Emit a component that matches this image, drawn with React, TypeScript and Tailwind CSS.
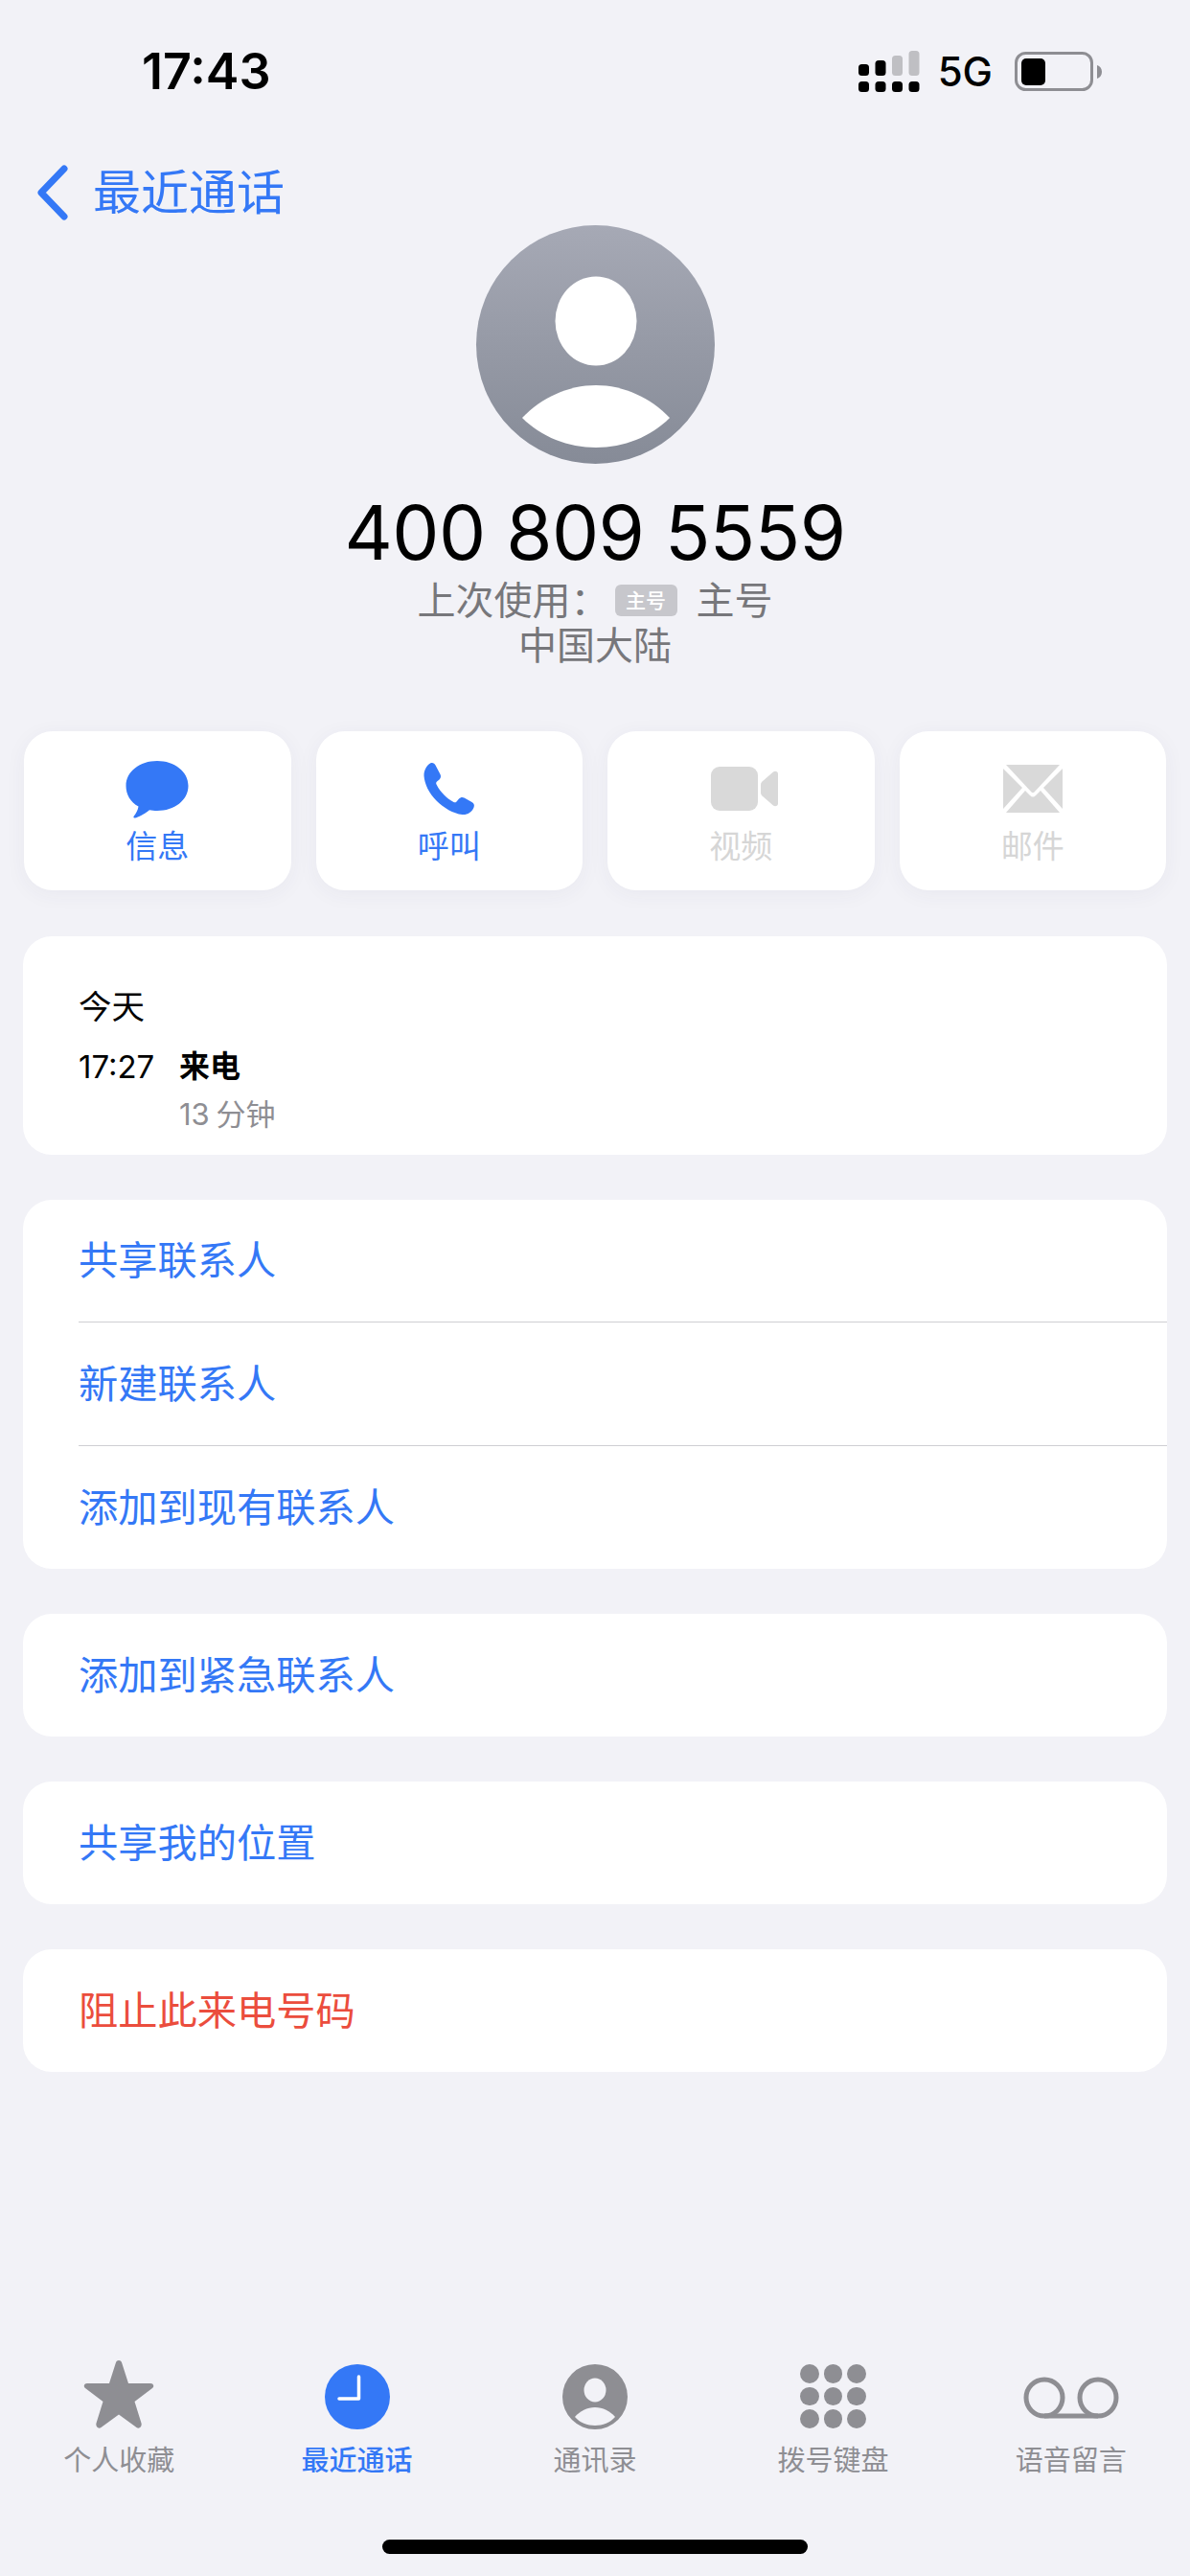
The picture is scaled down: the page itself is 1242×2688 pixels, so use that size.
const cjk = "font-['Inter','Noto_Sans_CJK_SC',sans-serif]";

function Signal() {
  return (
    <svg width="64" height="44" viewBox="0 0 64 44">
      <rect x="0" y="14" width="11" height="12" rx="3.5" fill="#000" />
      <rect x="17.5" y="10" width="11" height="16" rx="3.5" fill="#000" />
      <rect x="35" y="5" width="11" height="21" rx="3.5" fill="#bfbfc3" />
      <rect x="52.5" y="0" width="11" height="26" rx="3.5" fill="#bfbfc3" />
      <rect x="0" y="32" width="11" height="11" rx="3.5" fill="#000" />
      <rect x="17.5" y="32" width="11" height="11" rx="3.5" fill="#000" />
      <rect x="35" y="32" width="11" height="11" rx="3.5" fill="#000" />
      <rect x="52.5" y="32" width="11" height="11" rx="3.5" fill="#000" />
    </svg>
  );
}

function Battery() {
  return (
    <svg width="92" height="42" viewBox="0 0 92 42">
      <rect x="1.5" y="1.5" width="79" height="38" rx="10" fill="none" stroke="#8e8e93" strokeWidth="3" />
      <rect x="7" y="7" width="25" height="28" rx="5" fill="#000" />
      <path d="M86 14c3 1 5 3.500 5 7s-2 6-5 7z" fill="#8e8e93" />
    </svg>
  );
}

function Avatar() {
  return (
    <div className="flex h-[249px] w-[249px] items-center justify-center rounded-full bg-gradient-to-b from-[#a6a9b5] to-[#868b97]">
      <svg width="249" height="249" viewBox="0 0 249 249">
        <ellipse cx="125" cy="100" rx="42.500" ry="46.500" fill="#fff" />
        <path d="M48 201C68 180 96 167 125 167C154 167 182 180 202 201C182 221 154 232 125 232C96 232 68 221 48 201Z" fill="#fff" />
      </svg>
    </div>
  );
}

function MessageIcon() {
  return (
    <svg width="66" height="60" viewBox="0 0 66 60">
      <path d="M33 0C51 0 65.500 11 65.500 26S51 52 33 52C30 52 27.500 51.800 25 51.300C20 55.500 13 59 10 59.500C8 59.800 8 58.500 9 57.300C11 55 13 51 13.500 47.500C5 43 .5 35 .5 26C.5 11 15 0 33 0Z" fill="#3478f6" />
    </svg>
  );
}

function PhoneIcon() {
  return (
    <svg className="mb-[3px]" width="54" height="56" viewBox="0 0 54 56">
      <path d="M7 1.500C9.500 .5 11.500 1.500 12.500 3.500L17.500 13C18.500 15 18 17 16.500 18.500L14 20.500C13 21.500 13 22.500 13.500 23.500C15.500 28 19 32 21.500 34.500C24 37 27.500 40 31.500 42C32.500 42.500 33.500 42.500 34.500 41.500L37 38.500C38.500 37 40.500 36.500 42.500 37.500L50.500 42C52.500 43 53.500 45 52.500 47.500C50.500 52.500 45.500 55.500 40.500 55C31 54 21 48 13.500 40.500C6 33 1 23 .5 14.500C.3 9 3 4 7 1.500Z" fill="#3478f6" />
    </svg>
  );
}

function VideoIcon() {
  return (
    <svg className="mb-[7px] ml-[8px]" width="70" height="47" viewBox="0 0 70 47">
      <rect x="0" y="0" width="49" height="46" rx="9" fill="#d9d9d9" />
      <path d="M52 19C52 17.500 52.500 16.500 53.500 15.500L65 5.500C67 4 70 5 70 7.500V38.500C70 41 67 42 65 40.500L53.500 30.500C52.500 29.500 52 28.500 52 27Z" fill="#d9d9d9" />
    </svg>
  );
}

function MailIcon() {
  return (
    <svg className="mb-[6px]" width="62" height="50" viewBox="0 0 62 50">
      <path d="M3 0H59L32.500 28.500C31.500 29.500 30.500 29.500 29.500 28.500Z" fill="#d9d9d9" />
      <path d="M0 4L20 24L0 46Z" fill="#d9d9d9" />
      <path d="M62 4L42 24L62 46Z" fill="#d9d9d9" />
      <path d="M3 50L23 27L28 32C30 34 32 34 34 32L39 27L59 50Z" fill="#d9d9d9" />
    </svg>
  );
}

function StarIcon() {
  return (
    <svg width="74" height="72" viewBox="0 0 74 72">
      <path d="M37 0C38.800 0 39.800 1.200 40.300 3L47 24H70C73 24 74.500 27 72 29L53.500 43L60.500 65.500C61.500 69 58.500 72 55.500 70L37 56.500L18.500 70C15.500 72 12.500 69 13.500 65.500L20.500 43L2 29C-.5 27 1 24 4 24H27L33.700 3C34.200 1.200 35.200 0 37 0Z" fill="#8e8e93" />
    </svg>
  );
}

function ClockIcon() {
  return (
    <svg className="mt-[3px]" width="68" height="68" viewBox="0 0 68 68">
      <circle cx="34" cy="34" r="34" fill="#3478f6" />
      <path d="M35.500 13V36H15" fill="none" stroke="#fff" strokeWidth="3.500" strokeLinecap="round" strokeLinejoin="round" />
    </svg>
  );
}

function ContactsIcon() {
  return (
    <svg className="mt-[3px]" width="68" height="68" viewBox="0 0 68 68">
      <circle cx="34" cy="34" r="34" fill="#8e8e93" />
      <ellipse cx="34" cy="27" rx="11.500" ry="12.500" fill="#f2f2f7" />
      <path d="M13 55C18 49 26 45 34 45C42 45 50 49 55 55C50 61 42 64 34 64C26 64 18 61 13 55Z" fill="#f2f2f7" />
    </svg>
  );
}

function KeypadIcon() {
  const dots = [0, 1, 2, 3, 4, 5, 6, 7, 8];
  return (
    <div className="mt-[3px] grid h-[67px] w-[69px] grid-cols-3 grid-rows-3 gap-x-[5px] gap-y-[4px]">
      {dots.map((d) => (
        <div key={d} className="rounded-full bg-[#8e8e93]" />
      ))}
    </div>
  );
}

function VoicemailIcon() {
  return (
    <svg className="mt-[6px]" width="100" height="44" viewBox="0 0 100 44">
      <circle cx="22" cy="22" r="19" fill="none" stroke="#8e8e93" strokeWidth="5" />
      <circle cx="78" cy="22" r="19" fill="none" stroke="#8e8e93" strokeWidth="5" />
      <path d="M22 41H78" stroke="#8e8e93" strokeWidth="5" />
    </svg>
  );
}

function ActionButton({ icon, label, disabled }: { icon: React.ReactNode; label: string; disabled?: boolean }) {
  return (
    <div className="flex h-[166px] flex-col items-center rounded-[30px] bg-white shadow-[0_4px_22px_rgba(60,60,90,0.05)]">
      <div className="flex h-[102px] items-end justify-center pb-[11px]">{icon}</div>
      <span className={`text-[33px] leading-[36px] ${disabled ? "text-[#d6d6d6]" : "text-[#3478f6]"}`}>{label}</span>
    </div>
  );
}

function Card({ children }: { children: React.ReactNode }) {
  return <div className="overflow-hidden rounded-[30px] bg-white">{children}</div>;
}

function Row({ label, red, divider }: { label: string; red?: boolean; divider?: boolean }) {
  return (
    <div className="pl-[58px]">
      <div className={`flex h-[128.5px] items-center pt-[2px] text-[41.25px] ${red ? "text-[#eb4d3d]" : "text-[#3478f6]"} ${divider ? "border-b border-[#cfcfd3]" : ""}`}>
        {label}
      </div>
    </div>
  );
}

function Tab({ icon, label, active }: { icon: React.ReactNode; label: string; active?: boolean }) {
  return (
    <div className="flex flex-col items-center">
      <div className="flex h-[72px] items-center justify-center">{icon}</div>
      <span className={`mt-[16px] text-[29px] leading-[34px] ${active ? "font-medium text-[#3478f6]" : "text-[#8e8e93]"}`}>{label}</span>
    </div>
  );
}

export default function App() {
  return (
    <div className={`flex h-[2688px] w-[1242px] flex-col overflow-hidden bg-[#f2f2f7] ${cjk}`}>
      {/* status bar */}
      <div className="flex items-center justify-between pl-[148px] pr-[91px] pt-[51px]">
        <span className="text-[52px] leading-[48px] font-semibold text-black">17:43</span>
        <div className="flex items-center">
          <Signal />
          <span className="ml-[19px] text-[42px] leading-[44px] font-medium text-black">5G</span>
          <div className="ml-[23px]"><Battery /></div>
        </div>
      </div>

      {/* back */}
      <div className="mt-[73px] flex items-center pl-[37px]">
        <svg width="36" height="58" viewBox="0 0 36 58">
          <path d="M30 4L6 29L30 54" fill="none" stroke="#3478f6" strokeWidth="7" strokeLinecap="round" strokeLinejoin="round" />
        </svg>
        <span className="ml-[24px] text-[50px] leading-[58px] text-[#3478f6]">最近通话</span>
      </div>

      {/* header */}
      <div className="mt-[5px] flex flex-col items-center">
        <Avatar />
        <div className="mt-[26px] text-[78px] leading-[92px] tracking-[-0.5px] text-black">400 809 5559</div>
        <div className="mt-[1px] flex items-center text-[40px] leading-[47px] text-[#77777b]">
          <span>上次使用：</span>
          <span className="ml-[6px] flex h-[33px] w-[65px] items-center justify-center rounded-[6px] bg-[#c7c7cc] text-[21px] font-medium text-white">主号</span>
          <span className="ml-[20px]">主号</span>
        </div>
        <div className="text-[40px] leading-[47px] text-[#77777b]">中国大陆</div>
      </div>

      {/* action buttons */}
      <div className="mt-[66px] grid grid-cols-4 gap-[26px] px-[25px]">
        <ActionButton icon={<MessageIcon />} label="信息" />
        <ActionButton icon={<PhoneIcon />} label="呼叫" />
        <ActionButton icon={<VideoIcon />} label="视频" disabled />
        <ActionButton icon={<MailIcon />} label="邮件" disabled />
      </div>

      {/* lists */}
      <div className="mt-[48px] flex flex-col gap-[46.5px] px-[24px]">
        <div className="h-[228px] rounded-[30px] bg-white pl-[58px] pt-[52px]">
          <div className="text-[34.500px] leading-[44px] text-black">今天</div>
          <div className="mt-[18px] flex">
            <span className="w-[105px] text-[33px] leading-[44px] text-black">17:27</span>
            <div className="flex flex-col">
              <span className="text-[32px] leading-[44px] font-bold text-black">来电</span>
              <span className="mt-[6px] text-[31px] leading-[44px] [word-spacing:-2px] text-[#8e8e93]">13 分钟</span>
            </div>
          </div>
        </div>
        <Card>
          <Row label="共享联系人" divider />
          <Row label="新建联系人" divider />
          <Row label="添加到现有联系人" />
        </Card>
        <Card><Row label="添加到紧急联系人" /></Card>
        <Card><Row label="共享我的位置" /></Card>
        <Card><Row label="阻止此来电号码" red /></Card>
      </div>

      <div className="flex-1" />

      {/* tab bar */}
      <div className="grid grid-cols-5">
        <Tab icon={<StarIcon />} label="个人收藏" />
        <Tab icon={<ClockIcon />} label="最近通话" active />
        <Tab icon={<ContactsIcon />} label="通讯录" />
        <Tab icon={<KeypadIcon />} label="拨号键盘" />
        <Tab icon={<VoicemailIcon />} label="语音留言" />
      </div>

      {/* home indicator */}
      <div className="mt-[65px] mb-[23px] flex justify-center">
        <div className="h-[15px] w-[444px] rounded-full bg-black" />
      </div>
    </div>
  );
}
